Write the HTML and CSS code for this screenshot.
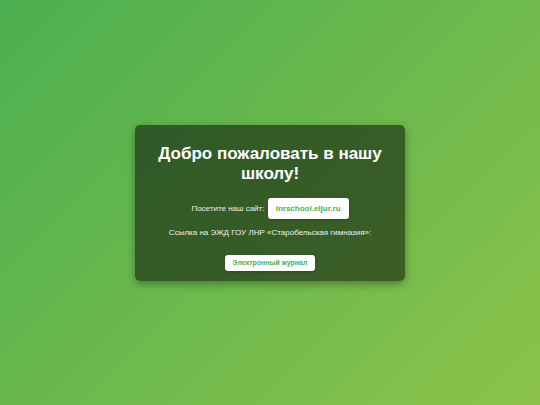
FILE: index.html
```html
<!DOCTYPE html>
<html lang="ru">
<head>
<meta charset="utf-8">
<title>Добро пожаловать</title>
<link rel="stylesheet" href="styles.css">
</head>
<body>
<main class="page">
  <section class="card">
    <h1 class="title">Добро пожаловать в нашу школу!</h1>
    <p class="row row-site">Посетите наш сайт: <a class="btn btn-site" href="#">lnrschool.eljur.ru</a></p>
    <p class="row row-text">Ссылка на ЭЖД ГОУ ЛНР «Старобельская гимназия»:</p>
    <p class="row row-btn"><a class="btn btn-journal" href="#">Электронный журнал</a></p>
  </section>
</main>
</body>
</html>
```
FILE: styles.css
```css
html, body {
  margin: 0;
  padding: 0;
  height: 100%;
}
body {
  font-family: "Liberation Sans", Arial, sans-serif;
  background: linear-gradient(135deg, #4caf50 0%, #8bc34a 100%);
}
.page {
  height: 100vh;
  display: flex;
  align-items: center;
  justify-content: center;
}
.card {
  box-sizing: border-box;
  width: 270px;
  padding: 19px 20px 10px;
  background: rgba(0, 0, 0, 0.5);
  border-radius: 5px;
  box-shadow: 0 3px 8px rgba(0, 0, 0, 0.35);
  text-align: center;
  color: #fff;
}
.title {
  margin: 0;
  font-size: 17px;
  line-height: 20px;
  font-weight: bold;
}
.row {
  margin: 0;
  font-size: 8px;
  line-height: 9px;
  color: #eee;
}
.row-site {
  margin-top: 14px;
}
.row-text {
  margin-top: 9px;
}
.row-btn {
  margin-top: 18px;
}
.btn {
  display: inline-block;
  background: #fff;
  color: #4caf50;
  font-weight: bold;
  text-decoration: none;
  border-radius: 3px;
  box-shadow: 0 1px 3px rgba(0, 0, 0, 0.2);
}
.btn-site {
  font-size: 8px;
  line-height: 9px;
  padding: 6px 8px;
  margin-left: 1px;
}
.btn-journal {
  font-size: 7px;
  line-height: 8px;
  padding: 4px 8px;
}
```
